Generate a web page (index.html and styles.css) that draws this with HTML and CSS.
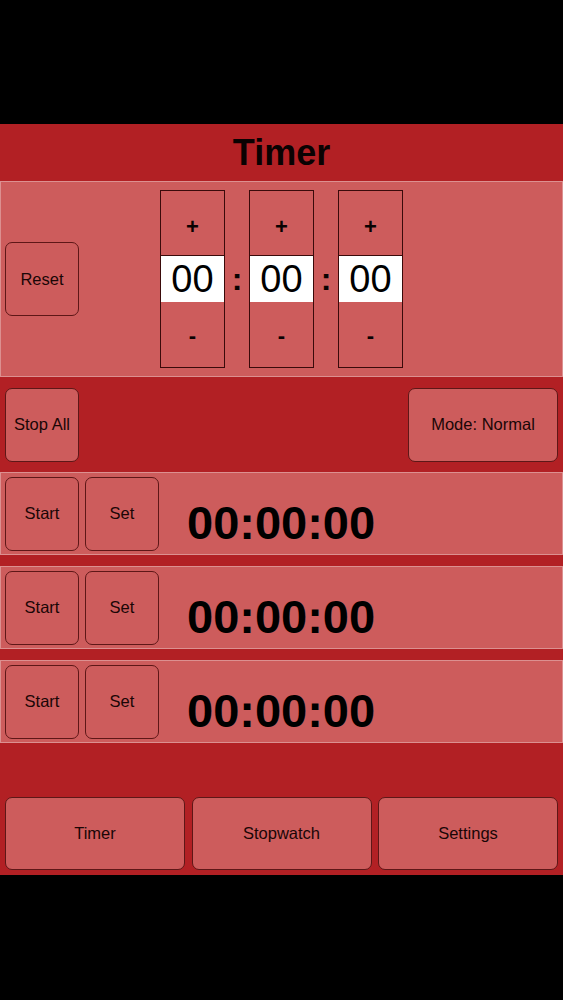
FILE: index.html
```html
<!DOCTYPE html>
<html>
<head>
<meta charset="utf-8">
<link rel="stylesheet" href="styles.css">
</head>
<body>
<div class="app">
  <div class="header">Timer</div>
  <div class="setter">
    <div class="btn square">Reset</div>
    <div class="spinners">
      <div class="spin">
        <div class="spin-plus">+</div>
        <div class="spin-value">00</div>
        <div class="spin-minus">-</div>
      </div>
      <div class="colon">:</div>
      <div class="spin">
        <div class="spin-plus">+</div>
        <div class="spin-value">00</div>
        <div class="spin-minus">-</div>
      </div>
      <div class="colon">:</div>
      <div class="spin">
        <div class="spin-plus">+</div>
        <div class="spin-value">00</div>
        <div class="spin-minus">-</div>
      </div>
    </div>
  </div>
  <div class="controls">
    <div class="btn square">Stop All</div>
    <div class="btn mode">Mode: Normal</div>
  </div>
  <div class="timer-row">
    <div class="btn square">Start</div>
    <div class="btn square">Set</div>
    <div class="time">00:00:00</div>
  </div>
  <div class="timer-row">
    <div class="btn square">Start</div>
    <div class="btn square">Set</div>
    <div class="time">00:00:00</div>
  </div>
  <div class="timer-row">
    <div class="btn square">Start</div>
    <div class="btn square">Set</div>
    <div class="time">00:00:00</div>
  </div>
  <div class="nav">
    <div class="btn nav-btn">Timer</div>
    <div class="btn nav-btn">Stopwatch</div>
    <div class="btn nav-btn">Settings</div>
  </div>
</div>
</body>
</html>
```

FILE: styles.css
```css
html, body {
  margin: 0;
  padding: 0;
  background: #000;
  font-family: "Liberation Sans", Arial, sans-serif;
  color: #140404;
}

.app {
  margin-top: 124px;
  height: 751px;
  background: #b22024;
  display: flex;
  flex-direction: column;
}

.header {
  height: 57px;
  display: flex;
  align-items: center;
  justify-content: center;
  font-size: 36px;
  font-weight: bold;
  color: #0a0202;
}

.btn {
  box-sizing: border-box;
  background: #cd5c5c;
  border: 1px solid #5e1717;
  border-radius: 7px;
  display: flex;
  align-items: center;
  justify-content: center;
  font-size: 16.5px;
  color: #1a0606;
}

.square {
  width: 74px;
  height: 74px;
  flex: none;
}

.setter {
  box-sizing: border-box;
  height: 196px;
  background: #cd5c5c;
  border: 1px solid #dc9090;
  display: flex;
  align-items: center;
  padding-left: 4px;
}

.spinners {
  display: flex;
  align-items: center;
  margin-left: 81px;
}

.spin {
  box-sizing: border-box;
  width: 65px;
  height: 178px;
  border: 1px solid #3a0a0a;
  display: flex;
  flex-direction: column;
}

.spin-plus,
.spin-minus {
  display: flex;
  align-items: center;
  justify-content: center;
  font-size: 22px;
  font-weight: bold;
  color: #0a0202;
}

.spin-plus {
  box-sizing: border-box;
  height: 65px;
  padding-top: 7px;
  border-bottom: 1px solid #3a0a0a;
}

.spin-minus {
  flex: 1;
  padding-top: 2px;
}

.spin-value {
  height: 46px;
  background: #fff;
  display: flex;
  align-items: center;
  justify-content: center;
  font-size: 38px;
  color: #000;
}

.colon {
  width: 24px;
  text-align: center;
  font-size: 32px;
  font-weight: bold;
  color: #0a0202;
}

.controls {
  height: 95px;
  display: flex;
  align-items: center;
  justify-content: space-between;
  padding: 0 5px;
}

.mode {
  width: 150px;
  height: 74px;
}

.timer-row {
  box-sizing: border-box;
  height: 83px;
  margin-bottom: 11px;
  background: #cd5c5c;
  border: 1px solid #dc9090;
  display: flex;
  align-items: center;
  padding-left: 4px;
  gap: 6px;
}

.timer-row:last-of-type {
  margin-bottom: 0;
}

.time {
  margin-left: 22px;
  font-size: 47px;
  font-weight: bold;
  color: #000;
  line-height: 1;
  margin-top: 18px;
}

.nav {
  margin-top: auto;
  display: flex;
  gap: 6.5px;
  padding: 0 5px 5px 5px;
}

.nav-btn {
  flex: 1;
  height: 73px;
}
```
